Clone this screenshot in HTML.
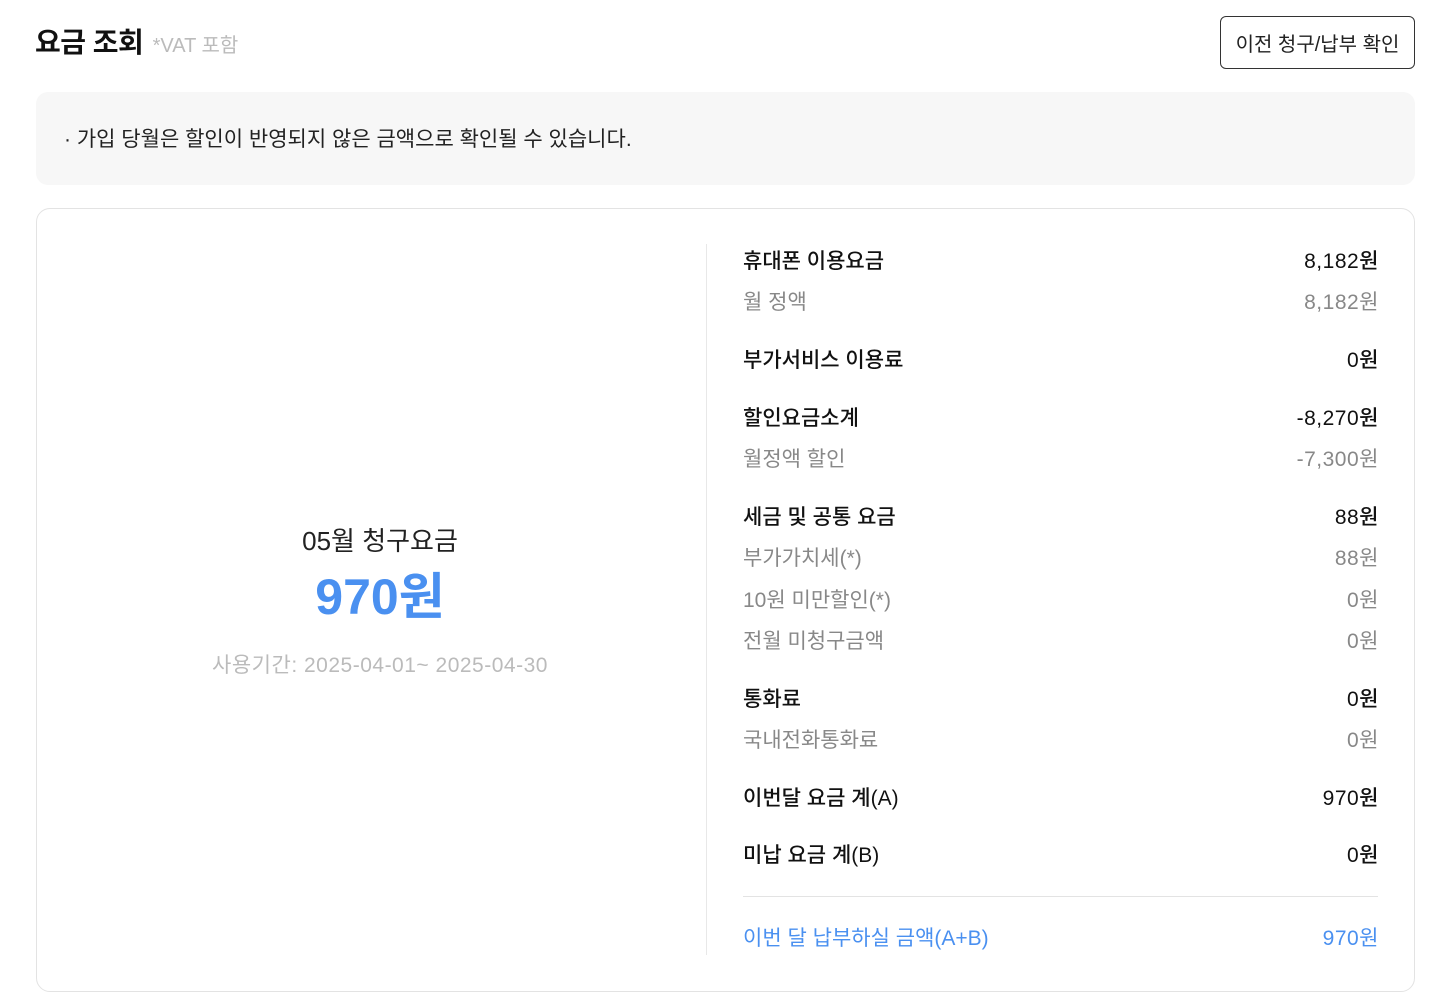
<!DOCTYPE html>
<html><head><meta charset="utf-8"><style>
*{margin:0;padding:0;box-sizing:border-box}
body{width:1433px;height:993px;background:#fff;font-family:"Liberation Sans","Noto Sans CJK KR",sans-serif;color:#111;position:relative;overflow:hidden}
.abs{position:absolute;white-space:nowrap}
.title{left:35px;top:25px;font-size:28px;font-weight:700;line-height:36px;letter-spacing:-0.5px}
.title span{font-size:20px;font-weight:400;color:#bbb;margin-left:2px;letter-spacing:0}
.btn{left:1220px;top:16px;width:195px;height:53px;border:1px solid #333;border-radius:6px;font-size:20px;display:flex;align-items:center;justify-content:center;color:#222}
.notice{left:36px;top:92px;width:1379px;height:93px;background:#f7f7f7;border-radius:12px}
.notice p{position:absolute;left:28px;top:31px;font-size:21px;color:#222}
.card{left:36px;top:208px;width:1379px;height:784px;border:1px solid #e3e3e3;border-radius:14px}
.vline{left:706px;top:244px;width:1px;height:711px;background:#e8e8e8}
.hline{left:743px;top:896px;width:635px;height:1px;background:#e3e3e3}
.row{left:743px;width:636px;height:28px;display:flex;justify-content:space-between;align-items:center;font-size:21px}
.row span:last-child{letter-spacing:0.5px}
.m{font-weight:500;color:#111}
.s{color:#888}
.b{color:#4a90f0}
.center{left:130px;width:500px;text-align:center}
</style></head><body>
<div class="abs title">요금 조회 <span>*VAT 포함</span></div>
<div class="abs btn">이전 청구/납부 확인</div>
<div class="abs notice"><p>· 가입 당월은 할인이 반영되지 않은 금액으로 확인될 수 있습니다.</p></div>
<div class="abs card"></div>
<div class="abs vline"></div>
<div class="abs center" style="top:521px;font-size:26px;color:#222">05월 청구요금</div>
<div class="abs center" style="top:567px;font-size:50px;font-weight:700;color:#4a90f0;line-height:60px">970원</div>
<div class="abs center" style="top:649px;font-size:21px;color:#bbb;letter-spacing:0.5px">사용기간: 2025-04-01~ 2025-04-30</div>

<div class="abs row m" style="top:246px"><span>휴대폰 이용요금</span><span>8,182원</span></div>
<div class="abs row s" style="top:287px"><span>월 정액</span><span>8,182원</span></div>
<div class="abs row m" style="top:345px"><span>부가서비스 이용료</span><span>0원</span></div>
<div class="abs row m" style="top:403px"><span>할인요금소계</span><span>-8,270원</span></div>
<div class="abs row s" style="top:444px"><span>월정액 할인</span><span>-7,300원</span></div>
<div class="abs row m" style="top:502px"><span>세금 및 공통 요금</span><span>88원</span></div>
<div class="abs row s" style="top:543px"><span>부가가치세(*)</span><span>88원</span></div>
<div class="abs row s" style="top:585px"><span>10원 미만할인(*)</span><span>0원</span></div>
<div class="abs row s" style="top:626px"><span>전월 미청구금액</span><span>0원</span></div>
<div class="abs row m" style="top:684px"><span>통화료</span><span>0원</span></div>
<div class="abs row s" style="top:725px"><span>국내전화통화료</span><span>0원</span></div>
<div class="abs row m" style="top:783px"><span>이번달 요금 계(A)</span><span>970원</span></div>
<div class="abs row m" style="top:840px"><span>미납 요금 계(B)</span><span>0원</span></div>
<div class="abs hline"></div>
<div class="abs row b" style="top:923px"><span>이번 달 납부하실 금액(A+B)</span><span>970원</span></div>
</body></html>
